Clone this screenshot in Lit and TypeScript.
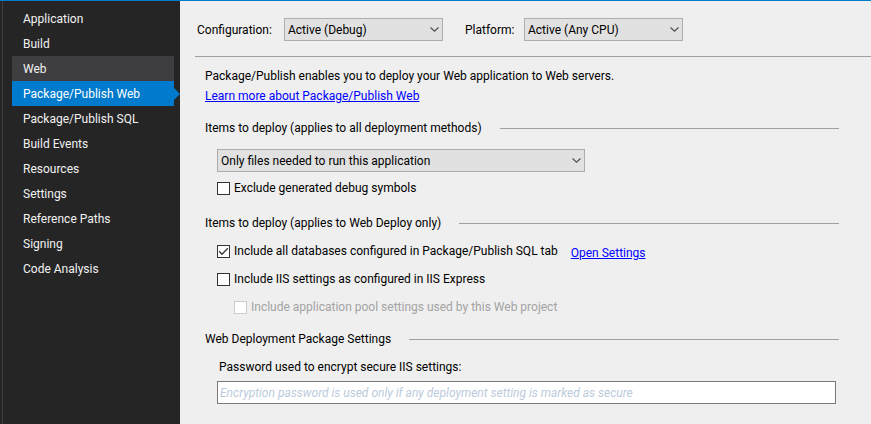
import { LitElement, html, css, svg } from "lit";
import { customElement, property, state } from "lit/decorators.js";
import { classMap } from "lit/directives/class-map.js";

const PAGES = [
  "Application",
  "Build",
  "Web",
  "Package/Publish Web",
  "Package/Publish SQL",
  "Build Events",
  "Resources",
  "Settings",
  "Reference Paths",
  "Signing",
  "Code Analysis",
];

@customElement("drop-down")
class DropDown extends LitElement {
  @property() label = "";
  @property() value = "";

  static styles = css`
    :host {
      display: grid;
      height: 23px;
    }
    select,
    svg {
      grid-area: 1 / 1;
    }
    select {
      appearance: none;
      width: 100%;
      height: 23px;
      margin: 0;
      padding: 0 24px 0 3px;
      border: 1px solid #adadad;
      border-radius: 0;
      background: #e1e1e1;
      color: #000;
      font: inherit;
    }
    svg {
      justify-self: end;
      align-self: center;
      margin-right: 4px;
      pointer-events: none;
    }
  `;

  render() {
    return html`
      <select aria-label=${this.label}>
        <option>${this.value}</option>
      </select>
      <svg width="9" height="5" viewBox="0 0 9 5" aria-hidden="true">
        ${svg`<path d="M0.5 0.5 L4.5 4.2 L8.5 0.5" fill="none" stroke="#505050" stroke-width="1.2" />`}
      </svg>
    `;
  }
}

@customElement("check-option")
class CheckOption extends LitElement {
  @property() label = "";
  @property({ type: Boolean }) checked = false;
  @property({ type: Boolean }) disabled = false;

  static styles = css`
    :host {
      display: block;
    }
    label {
      display: flex;
      align-items: center;
      gap: 4px;
      height: 18px;
    }
    .box {
      display: grid;
      flex: none;
    }
    input,
    svg {
      grid-area: 1 / 1;
    }
    input {
      appearance: none;
      width: 13px;
      height: 13px;
      margin: 0;
      border: 1px solid #333;
      background: #fff;
    }
    svg {
      visibility: hidden;
      pointer-events: none;
    }
    input:checked + svg {
      visibility: visible;
    }
    .off {
      color: #a3a3a3;
    }
    .off input {
      border-color: #ccc;
    }
  `;

  render() {
    return html`
      <label class=${classMap({ off: this.disabled })}>
        <span class="box">
          <input type="checkbox" .checked=${this.checked} ?disabled=${this.disabled} />
          <svg width="13" height="13" viewBox="0 0 13 13" aria-hidden="true">
            <path d="M2.2 6.3 L5 9.2 L10.8 3.3" fill="none" stroke="#333" stroke-width="1.3" />
          </svg>
        </span>
        ${this.label}
      </label>
    `;
  }
}

@customElement("app-root")
class AppRoot extends LitElement {
  @state() private current = "Package/Publish Web";
  @state() private hovered = "Web";

  static styles = css`
    :host {
      display: flex;
      box-sizing: border-box;
      min-height: 100vh;
      border-top: 1px solid #007acc;
      background: #efefef;
      color: #000;
      font: 12px/18px Roboto, "Open Sans", sans-serif;
    }
    .side {
      box-sizing: border-box;
      flex: none;
      width: 180px;
      padding-left: 2px;
      background: #252526;
    }
    .pages {
      box-sizing: border-box;
      min-height: 100%;
      padding: 5px 6px 5px 9px;
      border-left: 1px solid #3f3f46;
    }
    .page {
      display: block;
      position: relative;
      width: 100%;
      height: 25px;
      padding: 0 11px;
      border: 0;
      background: none;
      color: #f1f1f1;
      font: inherit;
      text-align: left;
      white-space: nowrap;
    }
    .hovered {
      background: #3e3e40;
    }
    .current {
      background: #007acc;
      color: #fff;
    }
    .current::after {
      content: "";
      position: absolute;
      top: 7px;
      left: 100%;
      border: 6px solid transparent;
      border-right-width: 0;
      border-left-color: #007acc;
    }
    .main {
      flex: 1;
      min-width: 0;
      padding-left: 15px;
    }
    .target {
      display: flex;
      align-items: center;
      padding: 17px 0 15px 2px;
      border-bottom: 1px solid #a0a0a0;
    }
    .target drop-down {
      width: 159px;
    }
    .configuration {
      width: 87px;
    }
    .platform {
      width: 59px;
      margin-left: 22px;
    }
    .body {
      padding: 10px 32px 19px 10px;
    }
    p {
      margin: 0;
    }
    a {
      color: #00f;
    }
    .intro {
      margin-bottom: 2px;
    }
    .heading {
      display: flex;
      align-items: center;
      gap: 18px;
      margin: 0;
      font: inherit;
    }
    .heading::after {
      content: "";
      flex: 1;
      height: 1px;
      background: #a0a0a0;
    }
    .group {
      margin-top: 14px;
    }
    .fields {
      padding: 12px 3px 0 12px;
    }
    .methods {
      padding-bottom: 3px;
    }
    .web-deploy {
      padding-top: 8px;
    }
    .package {
      padding-top: 10px;
    }
    .files {
      width: 368px;
      max-width: 100%;
      margin-bottom: 7px;
    }
    .row {
      display: flex;
      align-items: center;
      gap: 13px;
      margin-bottom: 8px;
    }
    .row a {
      padding-top: 4px;
    }
    .nested {
      margin: 10px 0 0 17px;
    }
    .secret {
      display: block;
      margin: 0 0 5px 2px;
    }
    .password {
      box-sizing: border-box;
      display: block;
      width: 100%;
      height: 23px;
      padding: 0 2px;
      border: 1px solid #7a7a7a;
      background: #fff;
      font: inherit;
    }
    .password::placeholder {
      color: #bccbdc;
      font-style: italic;
      opacity: 1;
    }
  `;

  render() {
    return html`
      <nav class="side" aria-label="Project properties">
        <div class="pages">
          ${PAGES.map(
            (name) => html`
              <button
                class=${classMap({
                  page: true,
                  current: name === this.current,
                  hovered: name === this.hovered && name !== this.current,
                })}
                @click=${() => (this.current = name)}
                @pointerenter=${() => (this.hovered = name)}
              >
                ${name}
              </button>
            `
          )}
        </div>
      </nav>
      <main class="main">
        <div class="target">
          <span class="configuration">Configuration:</span>
          <drop-down label="Configuration" value="Active (Debug)"></drop-down>
          <span class="platform">Platform:</span>
          <drop-down label="Platform" value="Active (Any CPU)"></drop-down>
        </div>
        <div class="body">
          <p class="intro">Package/Publish enables you to deploy your Web application to Web servers.</p>
          <a href="#learn">Learn more about Package/Publish Web</a>
          <section class="group">
            <h2 class="heading">Items to deploy (applies to all deployment methods)</h2>
            <div class="fields methods">
              <drop-down
                class="files"
                label="Items to deploy"
                value="Only files needed to run this application"
              ></drop-down>
              <check-option label="Exclude generated debug symbols"></check-option>
            </div>
          </section>
          <section class="group">
            <h2 class="heading">Items to deploy (applies to Web Deploy only)</h2>
            <div class="fields web-deploy">
              <div class="row">
                <check-option checked label="Include all databases configured in Package/Publish SQL tab"></check-option>
                <a href="#settings">Open Settings</a>
              </div>
              <check-option label="Include IIS settings as configured in IIS Express"></check-option>
              <check-option
                class="nested"
                disabled
                label="Include application pool settings used by this Web project"
              ></check-option>
            </div>
          </section>
          <section class="group">
            <h2 class="heading">Web Deployment Package Settings</h2>
            <div class="fields package">
              <label class="secret" for="password">Password used to encrypt secure IIS settings:</label>
              <input
                id="password"
                class="password"
                type="password"
                placeholder="Encryption password is used only if any deployment setting is marked as secure"
              />
            </div>
          </section>
        </div>
      </main>
    `;
  }
}
